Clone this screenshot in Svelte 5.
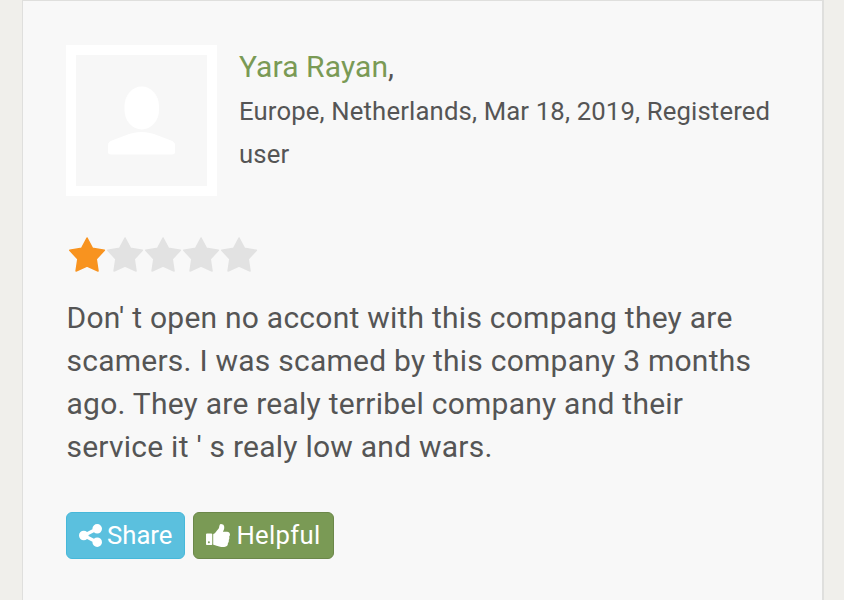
<script lang="ts">
  interface Review {
    author: string;
    details: string;
    rating: number;
    text: string;
  }

  const review: Review = {
    author: 'Yara Rayan',
    details: 'Europe, Netherlands, Mar 18, 2019, Registered user',
    rating: 1,
    text: "Don' t open no accont with this compang they are scamers. I was scamed by this company 3 months ago. They are realy terribel company and their service it ' s realy low and wars."
  };

  const stars = [1, 2, 3, 4, 5];
</script>

<main class="page">
  <article class="review">
    <header class="header">
      <div class="avatar">
        <svg viewBox="0 0 131 131" aria-hidden="true">
          <rect x="48.5" y="31.5" width="34.500" height="43" rx="17.2" ry="19.5" />
          <path d="M32 97V90Q32 87 36 85.500L49 80.500Q57 77 65.500 77T82 80.500L95 85.500Q99 87 99 90V97Q99 99.500 96 99.500H35Q32 99.500 32 97Z" />
        </svg>
      </div>
      <div class="info">
        <div class="author"><a class="name" href="#profile">{review.author}</a>,</div>
        <div class="details">{review.details}</div>
      </div>
    </header>

    <div class="rating" role="img" aria-label="{review.rating} out of 5">
      {#each stars as star}
        <svg class="star" class:filled={star <= review.rating} viewBox="0 0 38 38">
          <path d="M19 3 24.300 13.200 36.300 15.300 28.200 24 30 36 19 31 8 36 9.800 24 1.700 15.300 13.700 13.200Z" />
        </svg>
      {/each}
    </div>

    <p class="text">{review.text}</p>

    <div class="actions">
      <button class="btn share" type="button">
        <svg class="icon" viewBox="0 128 1536 1536" aria-hidden="true">
          <path d="M1216 1024q133 0 226.500 93.500t93.500 226.500-93.500 226.500-226.500 93.500-226.500-93.500-93.500-226.500q0-12 2-34l-360-180q-92 86-218 86-133 0-226.500-93.500t-93.500-226.500 93.500-226.500 226.500-93.500q126 0 218 86l360-180q-2-22-2-34 0-133 93.500-226.500t226.500-93.500 226.500 93.500 93.500 226.500-93.500 226.500-226.500 93.500q-126 0-218-86l-360 180q2 22 2 34t-2 34l360 180q92-86 218-86z" />
        </svg>
        <span>Share</span>
      </button>
      <button class="btn helpful" type="button">
        <svg class="icon thumb" viewBox="64 128 1600 1536" aria-hidden="true">
          <path d="M320 1344q0-26-19-45t-45-19q-27 0-45.500 19t-18.500 45q0 27 18.500 45.500t45.500 18.500q26 0 45-18.500t19-45.500zm160-512v640q0 26-19 45t-45 19h-288q-26 0-45-19t-19-45v-640q0-26 19-45t45-19h288q26 0 45 19t19 45zm1184 0q0 86-55 149 15 44 15 76 3 76-43 137 17 56 0 117-15 57-54 94 9 112-49 181-64 76-197 78h-129q-66 0-144-15.500t-121.500-29-120.500-39.500q-123-43-158-44-26-1-45-19.500t-19-44.500v-641q0-25 18-43.500t43-20.500q24-2 76-59t101-121q68-87 101-120 18-18 31-48t17.500-48.500 13.500-60.500q7-39 12.500-61t19.500-52 34-50q19-19 45-19 46 0 82.500 10.500t60 26 40 40.500 24 45 12 50 5 45 .5 39q0 38-9.500 76t-19 60-27.500 56q-3 6-10 18t-11 22-8 24h277q78 0 135 57t57 135z" />
        </svg>
        <span>Helpful</span>
      </button>
    </div>
  </article>
</main>

<style>
  :global(body) {
    margin: 0;
    background: #f0efeb;
  }

  .page {
    box-sizing: border-box;
    height: 600px;
    padding: 0 20px 0 22px;
    overflow: hidden;
    font-family: Roboto, sans-serif;
    color: #555;
  }

  .review {
    box-sizing: border-box;
    height: 640px;
    padding: 44px 43px 0;
    border: solid #dfdfdd;
    border-width: 1px 2px 1px 1px;
    background: #f8f8f8;
  }

  .header {
    display: flex;
    gap: 22px;
  }

  .avatar {
    box-sizing: border-box;
    flex: none;
    width: 151px;
    height: 151px;
    border: 10px solid #fff;
    background: #f7f7f7;
  }

  .avatar svg {
    display: block;
    fill: #fff;
  }

  .info {
    flex: 1;
    line-height: 43px;
  }

  .author {
    font-size: 30px;
    letter-spacing: 0.1px;
  }

  .name {
    color: #7a9a55;
    text-decoration: none;
  }

  .details {
    margin-top: 2px;
    font-size: 25.7px;
    letter-spacing: 0.15px;
  }

  .rating {
    display: flex;
    margin-top: 39px;
    padding-left: 1.6px;
  }

  .star {
    width: 38.1px;
    height: 38px;
    fill: #e2e2e2;
    stroke: #e2e2e2;
    stroke-width: 1.5;
    stroke-linejoin: round;
  }

  .star.filled {
    fill: #f8931f;
    stroke: #f8931f;
  }

  .text {
    margin: 23px 0 0;
    padding-left: 0.5px;
    font-size: 30px;
    line-height: 43px;
    letter-spacing: 0.24px;
  }

  .actions {
    display: flex;
    gap: 8px;
    margin-top: 44px;
  }

  .btn {
    display: flex;
    align-items: center;
    box-sizing: border-box;
    height: 47px;
    padding: 0 12px 1px;
    border: 1px solid;
    border-radius: 6px;
    font: 25.7px Roboto, sans-serif;
    color: #fff;
  }

  .share {
    width: 119px;
    border-color: #46b8da;
    background: #5bc0de;
  }

  .helpful {
    width: 141px;
    border-color: #6b8749;
    background: #7a9a55;
    letter-spacing: 0.3px;
  }

  .icon {
    flex: none;
    width: 23px;
    height: 23px;
    margin-right: 5px;
    fill: #fff;
  }

  .icon.thumb {
    width: 24px;
    margin-right: 6.5px;
  }
</style>
